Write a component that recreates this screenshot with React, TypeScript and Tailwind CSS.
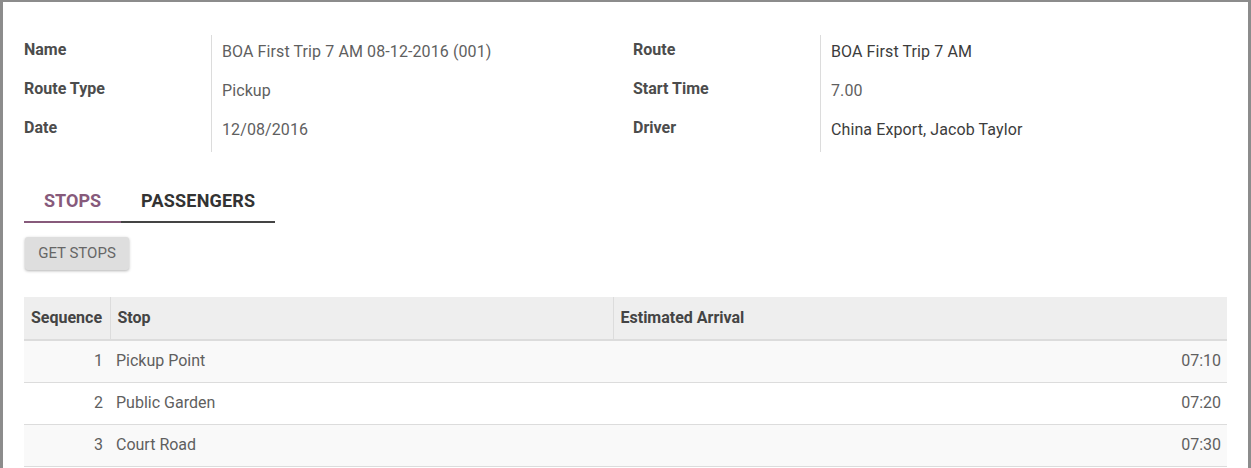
const font = "font-['Roboto',_'Liberation_Sans',_sans-serif]";

const leftFields = [
  { label: "Name", value: "BOA First Trip 7 AM 08-12-2016 (001)", dark: false },
  { label: "Route Type", value: "Pickup", dark: false },
  { label: "Date", value: "12/08/2016", dark: false },
];

const rightFields = [
  { label: "Route", value: "BOA First Trip 7 AM", dark: true },
  { label: "Start Time", value: "7.00", dark: false },
  { label: "Driver", value: "China Export, Jacob Taylor", dark: true },
];

const stops = [
  { seq: 1, name: "Pickup Point", eta: "07:10" },
  { seq: 2, name: "Public Garden", eta: "07:20" },
  { seq: 3, name: "Court Road", eta: "07:30" },
];

type Field = { label: string; value: string; dark: boolean };

function FieldGroup({ fields }: { fields: Field[] }) {
  return (
    <div className="grid grid-cols-[188px_1fr]">
      {/* label column carries the divider */}
      <div className="border-r border-[#dcdcdc]">
        {fields.map((f) => (
          <div key={f.label} className="h-[39px] pt-[5px] text-[16px] leading-[20px] font-bold text-[#4c4c4c]">
            {f.label}
          </div>
        ))}
      </div>
      <div className="pl-[10px]">
        {fields.map((f) => (
          <div
            key={f.label}
            className={`h-[39px] pt-[7px] text-[16px] leading-[20px] tracking-[0.1px] ${f.dark ? "text-[#3c3c3c]" : "text-[#5f5f5f]"}`}
          >
            {f.value}
          </div>
        ))}
      </div>
    </div>
  );
}

export default function App() {
  return (
    <div
      className={`${font} h-[468px] w-[1251px] overflow-hidden border-t-2 border-l-[3px] border-r-[3px] border-[#8c8c8c] bg-white px-[21px] pt-[33px]`}
    >
      {/* Header fields */}
      <div className="grid grid-cols-2 gap-x-[15px]">
        <FieldGroup fields={leftFields} />
        <FieldGroup fields={rightFields} />
      </div>

      {/* Tabs */}
      <div className="mt-[37px] flex">
        <div className="border-b-2 border-[#875a7b] px-5 pb-[8px] text-[18px] leading-[24px] font-bold text-[#875a7b]">
          STOPS
        </div>
        <div className="border-b-2 border-[#444] px-5 pb-[8px] text-[18px] leading-[24px] font-bold tracking-[0.2px] text-[#333]">
          PASSENGERS
        </div>
      </div>

      {/* Action */}
      <button className="mt-[14px] ml-px h-[33px] w-[104px] rounded-[3px] bg-[#dedede] text-[15px] text-[#666] shadow-[0_1px_3px_rgba(0,0,0,0.3)]">
        GET STOPS
      </button>

      {/* Stops table */}
      <table className="mt-[27px] w-full table-fixed border-collapse text-[16px]">
        <colgroup>
          <col className="w-[86px]" />
          <col className="w-[503px]" />
          <col />
        </colgroup>
        <thead>
          <tr className="h-[43px] bg-[#eeeeee] text-left font-bold text-[#444]">
            <th className="border-r border-b-2 border-[#dcdcdc] px-[7px]">Sequence</th>
            <th className="border-r border-b-2 border-[#dcdcdc] px-[7px]">Stop</th>
            <th className="border-b-2 border-[#dcdcdc] px-[7px]">Estimated Arrival</th>
          </tr>
        </thead>
        <tbody className="text-[#5f5f5f]">
          {stops.map((s, i) => (
            <tr key={s.seq} className={`h-[42px] border-b border-[#dcdcdc] ${i % 2 === 0 ? "bg-[#f9f9f9]" : "bg-white"}`}>
              <td className="px-[7px] text-right">{s.seq}</td>
              <td className="px-[6px]">{s.name}</td>
              <td className="px-[6px] text-right">{s.eta}</td>
            </tr>
          ))}
        </tbody>
      </table>
    </div>
  );
}
